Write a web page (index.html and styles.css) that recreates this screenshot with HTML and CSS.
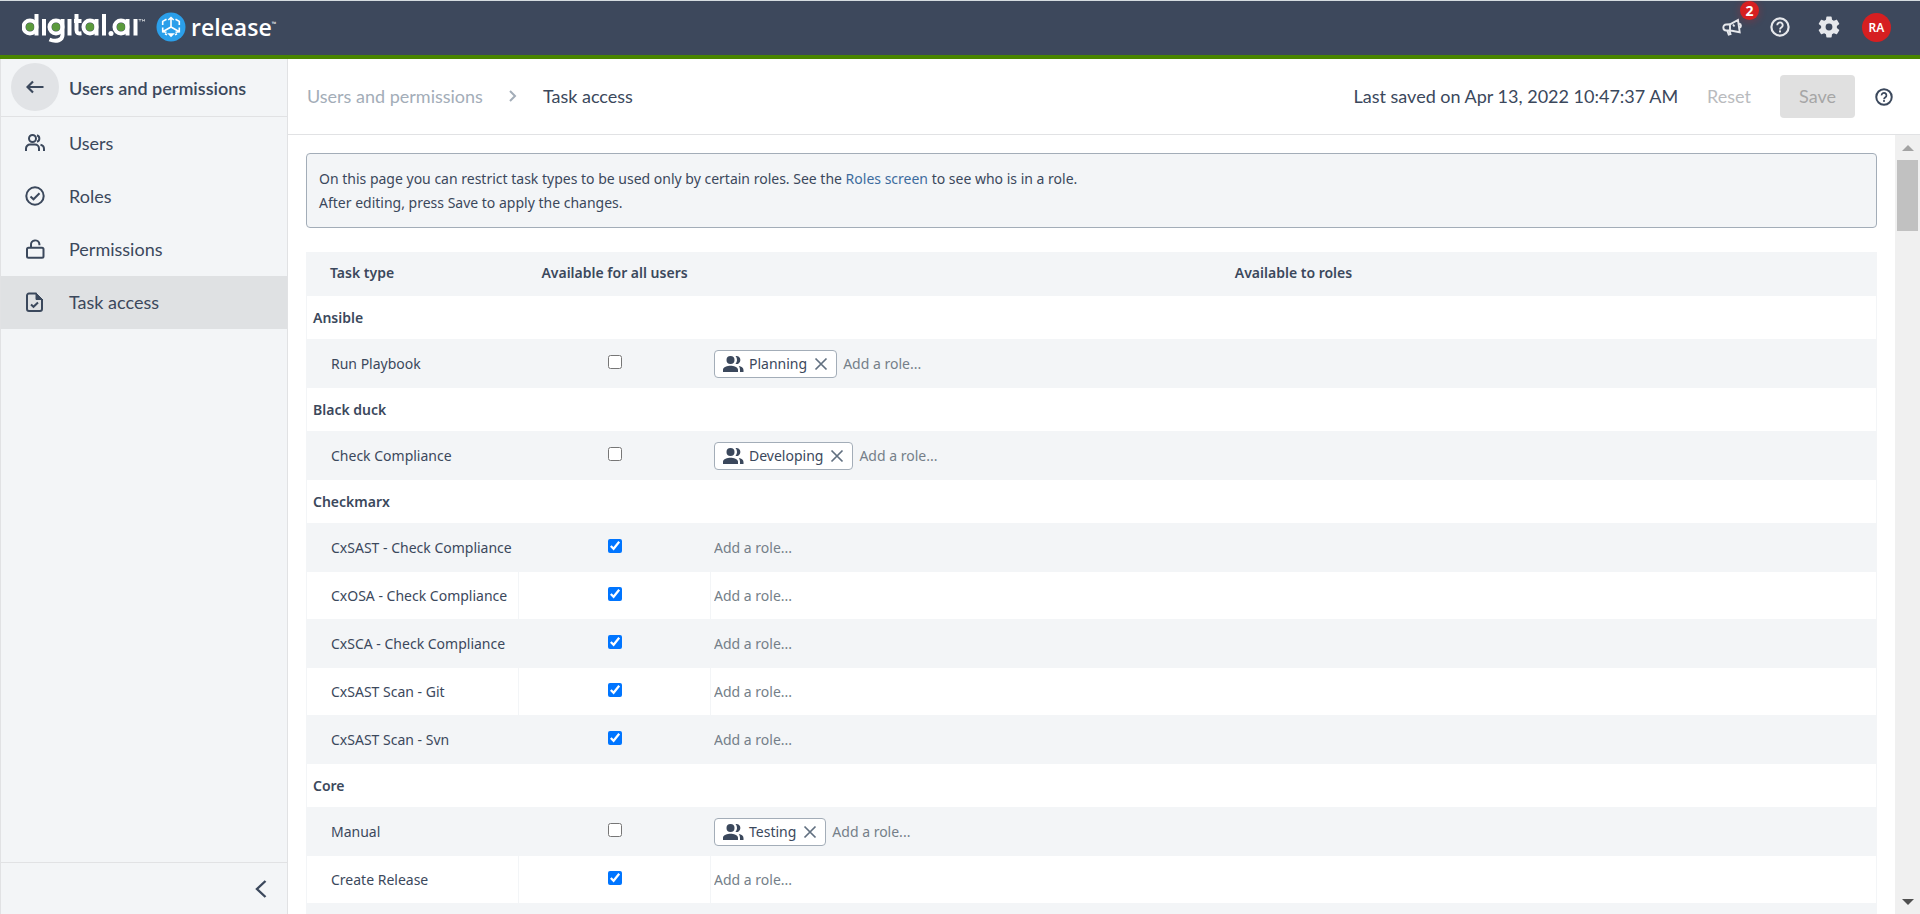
FILE: index.html
```html
<!DOCTYPE html>
<html lang="en">
<head>
<meta charset="utf-8">
<title>Task access</title>
<link rel="stylesheet" href="styles.css">
</head>
<body>
<svg class="sprite" aria-hidden="true">
  <symbol id="help" viewBox="0 0 20 20"><circle cx="10" cy="10" r="8.600" fill="none" stroke="currentColor" stroke-width="2.200"/><path d="M7.300 8.200a2.700 2.700 0 1 1 4.300 2.100c-1 .7-1.600 1.100-1.600 2.200" fill="none" stroke="currentColor" stroke-width="1.900"/><rect x="9" y="13.400" width="2" height="2" fill="currentColor"/></symbol>
  <symbol id="people" viewBox="0 0 22 18"><g fill="currentColor"><circle cx="8.500" cy="5" r="4"/><path d="M13.500 1.100a4 4 0 1 1 0 7.800 5.800 5.800 0 0 0 0-7.800zM1 17v-2.200C1 12 5.500 10.700 8.500 10.700S16 12 16 14.800V17zM16.800 11c2.600.5 4.700 1.700 4.700 3.900V17h-3.500v-2.200c0-1.500-.4-2.800-1.200-3.800z"/></g></symbol>
  <symbol id="cross" viewBox="0 0 14 14"><path d="M1.500 1.500l11 11M12.500 1.500l-11 11" fill="none" stroke="currentColor" stroke-width="1.700"/></symbol>
</svg>
<header class="topbar">
  <div class="brand" role="img" aria-label="digital.ai release">
    <svg class="wordmark" width="124" height="34" viewBox="0 0 124 34" fill="none" stroke="#fff" stroke-width="4">
      <g><circle cx="8" cy="17" r="6.500"/><path d="M14.500 4v21.500M22 9v16.500"/><circle cx="34" cy="17" r="6.500"/><path d="M40.500 9v16c0 5-6 7.500-13 4.500M47.500 9v16.500M54.500 4v16c0 3 1.500 3.700 5 3.300M52 11h7.500"/><circle cx="68" cy="17" r="6.500"/><path d="M74.500 9v16.500M82 4v21.500"/><circle cx="99" cy="17" r="6.500"/><path d="M105.500 9v16.500M113.500 9v16.500"/></g>
      <circle cx="89" cy="23.500" r="2.500" fill="#fff" stroke="none"/>
      <g fill="#5b9a3c" stroke="none"><circle cx="8" cy="17" r="4"/><circle cx="34" cy="17" r="4"/><circle cx="68" cy="17" r="4"/><circle cx="99" cy="17" r="4"/></g>
      <path d="M116.500 9.500h3M118 9.500v2M120.500 11.500v-2l1 1.300 1-1.300v2" stroke-width=".6"/>
    </svg>
    <svg class="cube" width="30" height="30" viewBox="0 0 30 30"><circle cx="15" cy="15" r="14.500" fill="#2b9fea"/><g fill="none" stroke="#fff" stroke-width="1.600"><path d="M15 15V6M15 15l-7.500 4.300M15 15l7.500 4.300M12.300 8L15 5.500 17.700 8M6.700 15.500v4.200l3.800.6M23.300 15.500v4.200l-3.800.6M10.500 7.200L6.700 9.400V13M19.500 7.200l3.800 2.200V13M9 21.700l2 1.200M21 21.700l-2 1.200"/><path d="M13 22l2 2 2-2z" fill="#fff"/></g></svg>
    <span class="product">release<sup class="tm">™</sup></span>
  </div>
  <nav class="tools" aria-label="Account">
    <button class="tool" aria-label="Announcements"><svg width="20" height="20" viewBox="0 0 20 20" fill="none" stroke="currentColor" stroke-width="1.900"><path d="M8 7.300L16 3l1.700 12.200L8.600 13.500H4.500a3 3 0 0 1-.3-6zM8 7.500v6M5.200 13.500l1.500 4.200 1.800-.5-1-3.500M17.300 6.700c2 .2 2.200 3.300.4 4M11 7.500l1.500 2"/></svg><span class="badge">2</span></button>
    <button class="tool" aria-label="Help"><svg width="20" height="20"><use href="#help"/></svg></button>
    <button class="tool" aria-label="Settings"><svg width="22" height="22" viewBox="2 2 20 20" fill="currentColor"><path d="M19.140 12.940c.04-.3.060-.61.060-.94 0-.32-.02-.64-.07-.94l2.030-1.580a.49.49 0 0 0 .12-.61l-1.920-3.320a.488.488 0 0 0-.59-.22l-2.390.96c-.5-.38-1.030-.7-1.620-.94l-.36-2.540a.484.484 0 0 0-.48-.41h-3.840c-.24 0-.43.17-.47.41l-.36 2.540c-.59.24-1.130.57-1.620.94l-2.390-.96c-.22-.08-.47 0-.59.22L2.740 8.870c-.12.21-.08.47.12.61l2.030 1.580c-.05.3-.09.63-.09.94s.02.64.07.94l-2.030 1.580a.49.49 0 0 0-.12.61l1.920 3.320c.12.22.37.29.59.22l2.390-.96c.5.38 1.030.7 1.620.94l.36 2.540c.05.24.24.41.48.41h3.840c.24 0 .44-.17.47-.41l.36-2.540c.59-.24 1.130-.56 1.620-.94l2.390.96c.22.08.47 0 .59-.22l1.920-3.320c.12-.22.07-.47-.12-.61zM12 15.100a3.100 3.100 0 1 1 0-6.200 3.100 3.100 0 0 1 0 6.200z"/></svg></button>
    <button class="avatar" aria-label="Account RA">RA</button>
  </nav>
</header>
<div class="shell">
  <aside class="sidebar">
    <div class="side-head">
      <button class="back" aria-label="Back"><svg width="18" height="14" viewBox="0 0 18 14" fill="none" stroke="currentColor" stroke-width="2.200"><path d="M17.500 7H2M7 1.500L1.500 7 7 12.500"/></svg></button>
      <h2 class="side-title">Users and permissions</h2>
    </div>
    <nav class="side-nav">
      <a class="side-link" href="#users"><svg width="20" height="20" viewBox="0 0 20 20" fill="none" stroke="currentColor" stroke-width="2"><circle cx="7.500" cy="5.500" r="3.500"/><path d="M1 18v-2.500a4 4 0 0 1 4-4h5a4 4 0 0 1 4 4V18M12 2.200a3.500 3.500 0 0 1 0 6.600M15.500 11.700c2.500.5 3.500 2 3.500 4.300v2"/></svg>Users</a>
      <a class="side-link" href="#roles"><svg width="20" height="20" viewBox="0 0 20 20" fill="none" stroke="currentColor" stroke-width="2"><circle cx="10" cy="10" r="8.700"/><path d="M5.500 10.500l3 2.800 6-6"/></svg>Roles</a>
      <a class="side-link" href="#permissions"><svg width="20" height="20" viewBox="0 0 20 20" fill="none" stroke="currentColor" stroke-width="2"><rect x="2" y="8.800" width="16.500" height="10" rx="1.500"/><path d="M6 8.800V6a4.200 4.200 0 0 1 8.400-.8v1"/></svg>Permissions</a>
      <a class="side-link active" href="#task-access" aria-current="page"><svg width="20" height="20" viewBox="0 0 20 20" fill="none" stroke="currentColor" stroke-width="2"><path d="M11.500 1.500H4a2 2 0 0 0-2 2v13.500a2 2 0 0 0 2 2h11a2 2 0 0 0 2-2V7M6 12.500l2.500 2.300 4.500-4.300"/><path d="M11 1l6.500 6.500H11z" fill="currentColor" stroke-width="1"/></svg>Task access</a>
    </nav>
    <div class="side-foot"><button class="collapse" aria-label="Collapse sidebar"><svg width="12" height="18" viewBox="0 0 12 18" fill="none" stroke="currentColor" stroke-width="2.400"><path d="M10.500 1L2 9l8.500 8"/></svg></button></div>
  </aside>
  <main class="main">
    <div class="actionbar">
      <nav class="crumbs" aria-label="Breadcrumb">
        <a class="crumb" href="#users">Users and permissions</a>
        <svg class="crumb-sep" width="8" height="12" viewBox="0 0 8 12" fill="none" stroke="currentColor" stroke-width="2"><path d="M1 1l5 5-5 5"/></svg>
        <span>Task access</span>
      </nav>
      <div class="actions">
        <span class="saved">Last saved on Apr 13, 2022 10:47:37 AM</span>
        <button class="btn reset" disabled>Reset</button>
        <button class="btn save" disabled>Save</button>
        <button class="page-help" aria-label="Page help"><svg width="18" height="18"><use href="#help"/></svg></button>
      </div>
    </div>
    <div class="viewport">
      <div class="content">
        <p class="notice">On this page you can restrict task types to be used only by certain roles. See the <a class="link" href="#roles">Roles screen</a> to see who is in a role.<br>After editing, press Save to apply the changes.</p>
        <table class="grid">
          <colgroup><col class="col-type"><col class="col-all"><col></colgroup>
          <thead><tr><th class="head-type">Task type</th><th>Available for all users</th><th>Available to roles</th></tr></thead>
          <tbody>
            <tr class="group"><th colspan="3">Ansible</th></tr>
            <tr class="shade"><td>Run Playbook</td><td class="all"><input type="checkbox" aria-label="Run Playbook for all users"></td><td><div class="roles"><span class="chip"><svg width="22" height="18"><use href="#people"/></svg>Planning<button class="remove" aria-label="Remove Planning"><svg width="14" height="14"><use href="#cross"/></svg></button></span><input class="add" type="text" placeholder="Add a role..." aria-label="Add a role to Run Playbook"></div></td></tr>
            <tr class="group"><th colspan="3">Black duck</th></tr>
            <tr class="shade"><td>Check Compliance</td><td class="all"><input type="checkbox" aria-label="Check Compliance for all users"></td><td><div class="roles"><span class="chip"><svg width="22" height="18"><use href="#people"/></svg>Developing<button class="remove" aria-label="Remove Developing"><svg width="14" height="14"><use href="#cross"/></svg></button></span><input class="add" type="text" placeholder="Add a role..." aria-label="Add a role to Check Compliance"></div></td></tr>
            <tr class="group"><th colspan="3">Checkmarx</th></tr>
            <tr class="shade"><td>CxSAST - Check Compliance</td><td class="all"><input type="checkbox" checked aria-label="CxSAST - Check Compliance for all users"></td><td><div class="roles"><input class="add" type="text" placeholder="Add a role..." aria-label="Add a role to CxSAST - Check Compliance"></div></td></tr>
            <tr><td>CxOSA - Check Compliance</td><td class="all"><input type="checkbox" checked aria-label="CxOSA - Check Compliance for all users"></td><td><div class="roles"><input class="add" type="text" placeholder="Add a role..." aria-label="Add a role to CxOSA - Check Compliance"></div></td></tr>
            <tr class="shade"><td>CxSCA - Check Compliance</td><td class="all"><input type="checkbox" checked aria-label="CxSCA - Check Compliance for all users"></td><td><div class="roles"><input class="add" type="text" placeholder="Add a role..." aria-label="Add a role to CxSCA - Check Compliance"></div></td></tr>
            <tr><td>CxSAST Scan - Git</td><td class="all"><input type="checkbox" checked aria-label="CxSAST Scan - Git for all users"></td><td><div class="roles"><input class="add" type="text" placeholder="Add a role..." aria-label="Add a role to CxSAST Scan - Git"></div></td></tr>
            <tr class="shade"><td>CxSAST Scan - Svn</td><td class="all"><input type="checkbox" checked aria-label="CxSAST Scan - Svn for all users"></td><td><div class="roles"><input class="add" type="text" placeholder="Add a role..." aria-label="Add a role to CxSAST Scan - Svn"></div></td></tr>
            <tr class="group"><th colspan="3">Core</th></tr>
            <tr class="shade"><td>Manual</td><td class="all"><input type="checkbox" aria-label="Manual for all users"></td><td><div class="roles"><span class="chip"><svg width="22" height="18"><use href="#people"/></svg>Testing<button class="remove" aria-label="Remove Testing"><svg width="14" height="14"><use href="#cross"/></svg></button></span><input class="add" type="text" placeholder="Add a role..." aria-label="Add a role to Manual"></div></td></tr>
            <tr><td>Create Release</td><td class="all"><input type="checkbox" checked aria-label="Create Release for all users"></td><td><div class="roles"><input class="add" type="text" placeholder="Add a role..." aria-label="Add a role to Create Release"></div></td></tr>
            <tr class="shade"><td></td><td></td><td></td></tr>
          </tbody>
        </table>
      </div>
      <div class="scrollbar" aria-hidden="true"><span class="arrow up"></span><span class="thumb"></span><span class="arrow down"></span></div>
    </div>
  </main>
</div>
</body>
</html>
```
FILE: styles.css
```css
* { box-sizing: border-box; }
body {
  margin: 0;
  height: 100vh;
  display: flex;
  flex-direction: column;
  overflow: hidden;
  background: #fff;
  color: #3b485c;
  font: 14px/24px "Noto Sans", "Open Sans", sans-serif;
}
button { padding: 0; border: 0; background: none; color: inherit; font: inherit; }
a { color: inherit; text-decoration: none; }
svg { display: block; flex: none; }
.sprite { position: absolute; width: 0; height: 0; }

.topbar {
  flex: none;
  height: 59px;
  display: flex;
  align-items: center;
  justify-content: space-between;
  padding: 0 29px 2px 22px;
  background: #3d485c;
  border-top: 1px solid #d5dce0;
  border-bottom: 4px solid #498500;
}
.brand { display: flex; align-items: center; color: #fff; }
.cube { margin: 0 5px 0 10px; }
.product { font: 600 23px/30px "Open Sans", sans-serif; }
.tm { font-size: 6px; line-height: 6px; vertical-align: 10px; }
.tools { display: flex; align-items: center; gap: 28px; color: #e6e8ec; }
.tool { position: relative; }
.badge {
  position: absolute;
  left: 18px;
  top: -16px;
  width: 19px;
  height: 19px;
  border-radius: 50%;
  background: #d61f21;
  box-shadow: 0 1px 6px 2px rgba(214, 31, 33, .2);
  color: #fff;
  font-weight: 700;
  line-height: 19px;
}
.avatar {
  width: 29px;
  height: 29px;
  margin-left: -6px;
  border-radius: 50%;
  background: #d61f21;
  color: #fff;
  font-size: 12px;
  font-weight: 600;
  line-height: 29px;
}

.shell { flex: 1; min-height: 0; display: flex; }
.sidebar {
  flex: none;
  width: 288px;
  display: flex;
  flex-direction: column;
  background: #f3f5f7;
  border: 1px solid #e1e2e4;
  border-width: 0 1px;
  font: 18px/24px Lato, sans-serif;
}
.side-head {
  height: 58px;
  display: flex;
  align-items: center;
  gap: 10px;
  padding: 0 10px 2px;
  border-bottom: 1px solid #e1e2e4;
}
.back {
  width: 48px;
  height: 48px;
  display: grid;
  place-items: center;
  border-radius: 50%;
  background: #e1e3e6;
}
.side-title { margin: 0; padding-top: 2px; font-size: 18px; font-weight: 600; }
.side-nav { flex: 1; }
.side-link { height: 53px; display: flex; align-items: center; gap: 24px; padding: 0 24px 2px; }
.side-link.active { background: #dfe1e3; }
.side-foot {
  height: 52px;
  display: flex;
  align-items: center;
  justify-content: flex-end;
  padding: 0 20px;
  border-top: 1px solid #e1e2e4;
}

.main { flex: 1; min-width: 0; display: flex; flex-direction: column; }
.actionbar {
  flex: none;
  height: 76px;
  display: flex;
  align-items: center;
  justify-content: space-between;
  padding: 0 27px 0 19px;
  border-bottom: 1px solid #e1e2e4;
  font: 18px/24px Lato, sans-serif;
}
.crumbs, .actions { display: flex; align-items: center; }
.crumbs { gap: 26px; padding-bottom: 2px; }
.saved { padding-bottom: 2px; }
.crumb, .crumb-sep { color: #a3adb8; }
.btn { padding-bottom: 2px; color: #b9bbbe; }
.reset { margin: 0 29px; }
.save { width: 75px; height: 43px; border-radius: 4px; background: #e0e0e0; color: #a6a6a6; }
.page-help { margin-left: 20px; }

.viewport { flex: 1; min-height: 0; display: flex; }
.content { flex: 1; min-width: 0; overflow: hidden; padding: 18px 18px 0; }
.notice {
  margin: 0 0 24px;
  padding: 13px 12px 12px;
  border: 1px solid #a3adb8;
  border-radius: 4px;
  background: #f3f5f7;
}
.link { color: #3d6c9e; }

.grid { width: 100%; table-layout: fixed; border-collapse: collapse; }
.col-type { width: 212px; }
.col-all { width: 192px; }
.grid th, .grid td { padding: 0 3px; border: 1px solid #f3f5f7; }
.grid th { height: 44px; font-weight: 600; }
.grid thead th { height: 43px; padding-bottom: 2px; }
.grid td { height: 48px; }
.grid td:first-child { padding-left: 24px; white-space: nowrap; }
.grid thead, .shade { background: #f3f5f7; }
.grid .head-type { padding-left: 23px; text-align: left; }
.grid .group th { padding-left: 6px; text-align: left; }
.grid .all { padding-bottom: 6px; text-align: center; }
.all input { width: 14px; height: 14px; margin: 0; vertical-align: middle; }
.roles { display: flex; align-items: center; gap: 6px; }
.chip {
  height: 28px;
  display: flex;
  align-items: center;
  gap: 5px;
  padding: 0 8px 0 7px;
  border: 1px solid #a3adb8;
  border-radius: 4px;
  background: #fff;
}
.remove { margin-left: 2px; color: #617080; }
.add { flex: 1; min-width: 0; height: 24px; padding: 0; border: 0; background: none; color: inherit; font: inherit; }
.add::placeholder { color: #757f89; }

.scrollbar {
  flex: none;
  width: 25px;
  display: flex;
  flex-direction: column;
  align-items: center;
  padding: 10px 0 9px;
  background: #f0f0f0;
}
.arrow { border: 6px solid transparent; }
.up { border-top: 0; border-bottom-color: #a3a3a3; }
.down { margin-top: auto; border-bottom: 0; border-top-color: #505050; }
.thumb { width: 21px; height: 71px; margin-top: 9px; background: #c1c1c1; }
```
